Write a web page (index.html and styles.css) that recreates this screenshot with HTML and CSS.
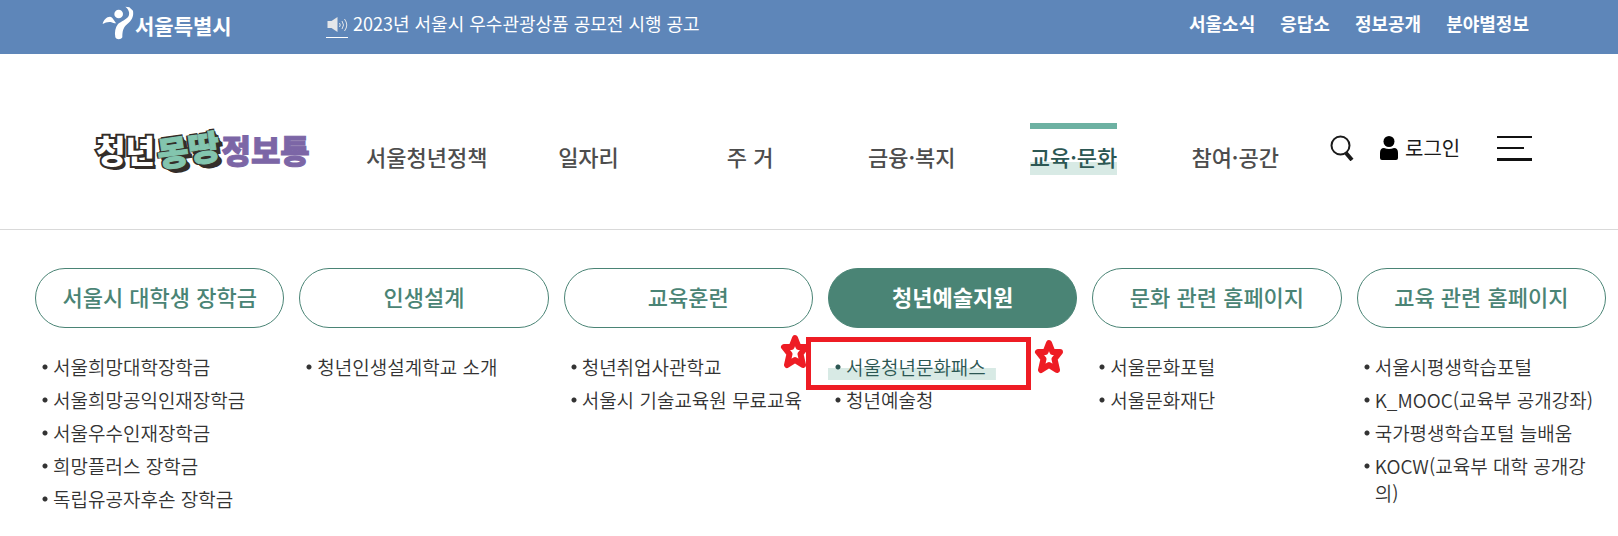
FILE: index.html
```
<!DOCTYPE html>
<html lang="ko">
<head>
    <meta charset="UTF-8">
    <meta name="viewport" content="width=device-width, initial-scale=1.0">
    <title>청년몽땅정보통</title>
    <link rel="stylesheet" href="styles.css">
</head>
<body>
    <div class="topbar">
        <a href="#" class="seoul">
            <svg class="seoul-mark" viewBox="10 8 96 102" aria-hidden="true">
                <circle cx="60" cy="32" r="13"/>
                <path d="M12 62C14 50 24 40 34 40C42 41 46 52 53 60C46 60 42 58 36 56C28 55 20 57 12 62Z"/>
                <path d="M80 10L92 12L103 22C106 40 98 52 86 62C74 72 71 82 71 102C68 109 53 110 50 102C47 86 50 72 58 62C68 54 82 50 90 38C94 28 90 18 80 10Z"/>
            </svg>
            <span>서울특별시</span>
        </a>
        <a href="#" class="notice">
            <span class="notice-icon">
                <svg viewBox="0 0 20 16" aria-hidden="true">
                    <path d="M0 4h4l6-4v15l-6-4H0z"/>
                    <path class="wave" d="M12 6q1.500 2 0 4M14.500 4q3 4 0 8M17 2q4.500 6 0 12"/>
                </svg>
            </span>
            <span>2023년 서울시 우수관광상품 공모전 시행 공고</span>
        </a>
        <div class="top-links">
            <a href="#">서울소식</a>
            <a href="#">응답소</a>
            <a href="#">정보공개</a>
            <a href="#">분야별정보</a>
        </div>
    </div>

    <header class="header">
        <a href="#" class="logo"><span class="logo-youth">청년</span><span class="logo-all">몽땅</span><span class="logo-info">정보통</span></a>
        <nav class="nav">
            <a href="#">서울청년정책</a>
            <a href="#">일자리</a>
            <a href="#">주 거</a>
            <a href="#">금융·복지</a>
            <a href="#" class="active">교육·문화</a>
            <a href="#">참여·공간</a>
        </nav>
        <div class="tools">
            <button type="button" class="search" aria-label="검색">
                <svg viewBox="0 0 24 26" aria-hidden="true">
                    <circle cx="10.500" cy="10.500" r="9"/>
                    <path d="M16 18l6 7"/>
                </svg>
            </button>
            <a href="#" class="login">
                <svg viewBox="0 0 18 24" aria-hidden="true">
                    <circle cx="9" cy="5.500" r="5.500"/>
                    <path d="M0 17q0-5 4-5q5 2 10 0q4 0 4 5v5q0 2-2 2H2q-2 0-2-2z"/>
                </svg>
                로그인
            </a>
            <button type="button" class="menu" aria-label="전체메뉴"><i></i><i></i><i></i></button>
        </div>
    </header>

    <main class="submenu">
        <section class="col">
            <a href="#" class="pill">서울시 대학생 장학금</a>
            <ul>
                <li><a href="#">서울희망대학장학금</a></li>
                <li><a href="#">서울희망공익인재장학금</a></li>
                <li><a href="#">서울우수인재장학금</a></li>
                <li><a href="#">희망플러스 장학금</a></li>
                <li><a href="#">독립유공자후손 장학금</a></li>
            </ul>
        </section>
        <section class="col">
            <a href="#" class="pill">인생설계</a>
            <ul>
                <li><a href="#">청년인생설계학교 소개</a></li>
            </ul>
        </section>
        <section class="col">
            <a href="#" class="pill">교육훈련</a>
            <ul>
                <li><a href="#">청년취업사관학교</a></li>
                <li><a href="#">서울시 기술교육원 무료교육</a></li>
            </ul>
        </section>
        <section class="col">
            <a href="#" class="pill active">청년예술지원</a>
            <ul>
                <li>
                    <a href="#" class="active">서울청년문화패스</a>
                    <svg class="star star-left" viewBox="0 0 30 36" aria-hidden="true"><path d="M15 4l3.500 9h7.500l-5.500 7l2.500 11l-8-5l-8 5l2.500-11l-5.500-7h7.500z"/></svg>
                    <span class="frame"></span>
                    <svg class="star star-right" viewBox="0 0 30 36" aria-hidden="true"><path d="M15 4l3.500 9h7.500l-5.500 7l2.500 11l-8-5l-8 5l2.500-11l-5.500-7h7.500z"/></svg>
                </li>
                <li><a href="#">청년예술청</a></li>
            </ul>
        </section>
        <section class="col">
            <a href="#" class="pill">문화 관련 홈페이지</a>
            <ul>
                <li><a href="#">서울문화포털</a></li>
                <li><a href="#">서울문화재단</a></li>
            </ul>
        </section>
        <section class="col">
            <a href="#" class="pill">교육 관련 홈페이지</a>
            <ul>
                <li><a href="#">서울시평생학습포털</a></li>
                <li><a href="#">K_MOOC(교육부 공개강좌)</a></li>
                <li><a href="#">국가평생학습포털 늘배움</a></li>
                <li><a href="#">KOCW(교육부 대학 공개강의)</a></li>
            </ul>
        </section>
    </main>
</body>
</html>
```
FILE: styles.css
```
* {
    box-sizing: border-box;
}
body {
    margin: 0;
    font-family: "Noto Sans CJK KR", sans-serif;
    color: #333;
    background: #fff;
}
a {
    color: inherit;
    text-decoration: none;
}
button {
    padding: 0;
    border: 0;
    background: none;
    cursor: pointer;
}
svg {
    display: block;
}
ul {
    list-style: none;
    margin: 0;
    padding: 0;
}

/* top bar */
.topbar {
    display: flex;
    align-items: center;
    height: 54px;
    padding: 0 89px 8px 102px;
    background: #5e86b9;
    color: #fff;
}
.seoul {
    display: flex;
    align-items: center;
    gap: 1px;
    width: 224px;
    font-size: 21px;
    font-weight: 700;
    line-height: 32px;
}
.seoul span {
    padding-top: 4px;
}
.seoul-mark {
    width: 32px;
    height: 34px;
    fill: #fff;
}
.notice {
    display: flex;
    align-items: center;
    gap: 5px;
    font-size: 18px;
    line-height: 28px;
}
.notice-icon {
    padding: 8px 0 4px 1px;
    border-bottom: 1px solid #fff;
}
.notice-icon svg {
    width: 21px;
    height: 16px;
    fill: #e4e6e9;
}
.notice-icon .wave {
    fill: none;
    stroke: #e4e6e9;
}
.top-links {
    display: flex;
    gap: 25px;
    margin-left: auto;
    font-size: 18px;
    font-weight: 700;
    line-height: 28px;
}

/* header */
.header {
    display: flex;
    align-items: center;
    padding: 69px 86px 54px 96px;
    border-bottom: 1px solid #d9d9d9;
}
.logo {
    display: flex;
    align-items: center;
    width: 212px;
    font-size: 32px;
    font-weight: 900;
    line-height: 48px;
    white-space: nowrap;
}
.logo-youth {
    color: #fff;
    -webkit-text-stroke: 4px #332d29;
    paint-order: stroke fill;
    text-shadow: 1px 1px #332d29, 2px 2px #332d29, 3px 3px #332d29;
}
.logo-all {
    margin-left: 2px;
    color: #83c5ae;
    font-size: 34px;
    -webkit-text-stroke: 1px #83c5ae;
    text-shadow: -2px -1px #332d29, 1px -2px #332d29, -2px 1px #332d29,
        2px 1px #332d29, 2px 3px #332d29, 3px 4px #332d29, 4px 5px #332d29;
    transform: rotate(-8deg);
}
.logo-info {
    margin-left: 2px;
    color: #7c66a6;
    -webkit-text-stroke: 1px #7c66a6;
}
.nav {
    display: grid;
    grid-template-columns: repeat(6, 1fr);
    justify-items: center;
    flex: 1;
    margin: 0 14px 0 38px;
}
.nav a {
    padding: 10px 0 2px;
    border-top: 6px solid transparent;
    color: #4d4d4d;
    font-size: 22px;
    font-weight: 500;
    line-height: 34px;
}
.nav .active {
    border-color: #6db1a2;
    color: #2c5753;
    background: linear-gradient(#d8eae5, #d8eae5) bottom / 100% 13px no-repeat;
}
.tools {
    display: flex;
    align-items: center;
    width: 202px;
    padding-bottom: 2px;
    color: #1a1a1a;
}
.search svg {
    width: 24px;
    height: 26px;
    fill: none;
    stroke: #1a1a1a;
    stroke-width: 2;
}
.search path {
    stroke-width: 4;
}
.login {
    display: flex;
    align-items: center;
    gap: 7px;
    margin-left: 26px;
    font-size: 20px;
    line-height: 28px;
}
.login svg {
    width: 18px;
    height: 24px;
}
.menu {
    display: flex;
    flex-direction: column;
    justify-content: space-between;
    width: 35px;
    height: 25px;
    margin-left: auto;
}
.menu i {
    width: 35px;
    height: 2px;
    background: #111;
}
.menu i:nth-child(2) {
    width: 27px;
}
.menu i:nth-child(3) {
    height: 3px;
}

/* sub menu */
.submenu {
    display: grid;
    grid-template-columns: repeat(6, 1fr);
    gap: 15px;
    padding: 38px 12px 20px 35px;
}
.pill {
    display: block;
    padding-bottom: 4px;
    border: 1px solid #4a8475;
    border-radius: 30px;
    color: #4a8475;
    font-size: 22px;
    font-weight: 500;
    line-height: 54px;
    text-align: center;
}
.pill.active {
    background: #4a8475;
    color: #fff;
    font-weight: 700;
}
.col ul {
    padding-top: 25px;
}
.col li {
    position: relative;
    margin-bottom: 6px;
    font-size: 19px;
    font-weight: 350;
    line-height: 27px;
}
.col li a {
    display: inline-block;
    padding: 0 10px 0 18px;
    background: radial-gradient(circle at 10px 14px, #333 2px, transparent 3px);
}
.col li .active {
    color: #2c5753;
    background: radial-gradient(circle at 10px 14px, #2c5753 2px, transparent 3px),
        linear-gradient(#d8eae5, #d8eae5) bottom / 100% 12px no-repeat;
}

/* red marks over the highlighted item */
.frame {
    position: absolute;
    top: -16px;
    left: -22px;
    width: 225px;
    height: 53px;
    border: 5px solid #ee1c24;
}
.star {
    position: absolute;
    width: 30px;
    height: 36px;
    fill: #fff;
    stroke: #ee1c24;
    stroke-width: 6;
    stroke-linejoin: round;
}
.star-left {
    top: -19px;
    left: -48px;
}
.star-right {
    top: -14px;
    left: 206px;
}
```
